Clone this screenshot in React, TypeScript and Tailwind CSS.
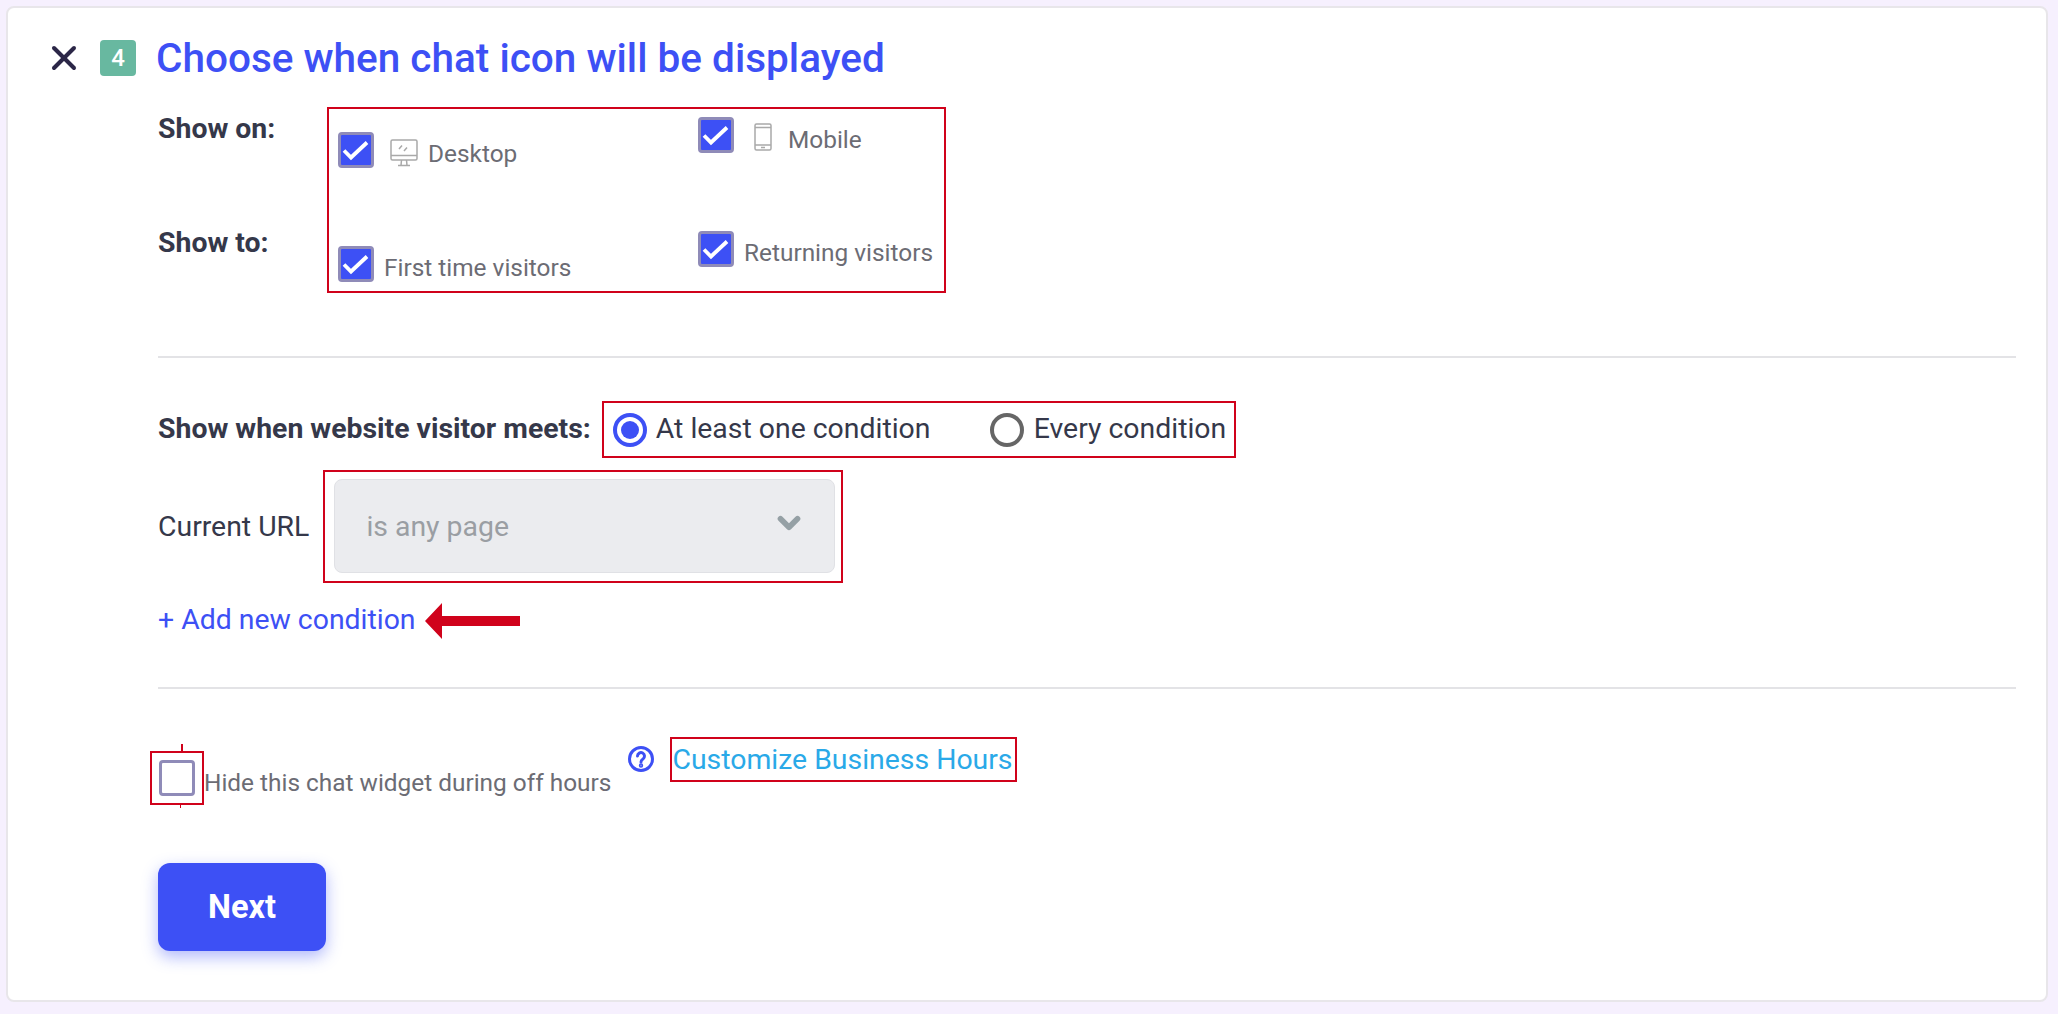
import { ChevronDown, X } from "lucide-react";

const RED = "border-2 border-[#d0021b]";

const CheckBox: React.FC<{ checked?: boolean }> = ({ checked = true }) => (
  <span
    className={
      "flex h-[36px] w-[36px] shrink-0 items-center justify-center rounded-[4px] border-[3px] border-[#8f8bb8] " +
      (checked ? "bg-[#3d50f5]" : "bg-white")
    }
  >
    {checked && (
      <svg width="30" height="30" viewBox="0 0 30 30" fill="none" stroke="#ffffff" strokeWidth="3.8">
        <path d="M3 15.500l7 7L26 7.500" />
      </svg>
    )}
  </span>
);

const DesktopIcon = () => (
  <svg width="28" height="28" viewBox="0 0 28 28" fill="none" stroke="#a9a9a9" strokeWidth="1.5">
    <rect x="1" y="1" width="26" height="20" rx="1.5" />
    <path d="M1 16.500h26M8 26.500h12M11.500 21l-.5 5.500M16.500 21l.5 5.500M9 10l3-3.500M14 12l3-3.500" />
  </svg>
);

const MobileIcon = () => (
  <svg width="18" height="28" viewBox="0 0 18 28" fill="none" stroke="#a9a9a9" strokeWidth="1.5">
    <rect x="1" y="1" width="16" height="26" rx="1.500" />
    <path d="M1 4.500h16M1 22h16M7 24.500h4" />
  </svg>
);

const HelpIcon = () => (
  <svg width="28" height="28" viewBox="0 0 28 28" fill="none" stroke="#3d50f5" strokeWidth="3">
    <circle cx="14" cy="14" r="11.500" />
    <path d="M10.500 11a3.500 3.500 0 1 1 5.500 3c-1.300.8-2 1.500-2 3" strokeLinecap="round" />
    <circle cx="14" cy="20.500" r="0.700" fill="#3d50f5" />
  </svg>
);

const Radio: React.FC<{ on?: boolean }> = ({ on }) => (
  <span
    className={
      "flex h-[34px] w-[34px] shrink-0 items-center justify-center rounded-full border-[4px] " +
      (on ? "border-[#3d50f5]" : "border-[#666666]")
    }
  >
    {on && <span className="h-[18px] w-[18px] rounded-full bg-[#3d50f5]" />}
  </span>
);

const Option: React.FC<{ label: string; icon?: React.ReactNode; textClass?: string }> = ({ label, icon, textClass }) => (
  <div className="flex items-start">
    <CheckBox />
    {icon}
    <span className={"text-[24.400px] leading-[27px] whitespace-nowrap text-[#6c6c74] " + (textClass || "")}>{label}</span>
  </div>
);

export default function App() {
  return (
    <div className="min-h-[1014px] bg-[#f6f0fe] pt-[6px] pr-[10px] pb-[12px] pl-[6px] font-['Roboto',sans-serif]">
      <div className="h-[996px] rounded-[8px] border-2 border-[#e8e6ea] bg-white pt-[28px] pr-[30px] pl-[150px]">
        <div className="relative flex items-center">
          <X className="absolute left-[-114px] top-[2px] h-[40px] w-[40px] text-[#2b2647]" strokeWidth={2.4} />
          <span className="absolute left-[-58px] top-[4px] flex h-[36px] w-[36px] items-center justify-center rounded-[4px] bg-[#68b8a0] text-[24px] font-medium text-white">
            4
          </span>
          <h1 className="ml-[-2px] text-[40.500px] font-medium leading-[44px] text-[#3d50f5]">Choose when chat icon will be displayed</h1>
        </div>

        <div className="mt-[27px] flex">
          <div className="w-[169px] pt-[6px] text-[28.400px] font-bold leading-[32px] text-[#35384a]">
            <div>Show on:</div>
            <div className="mt-[82px]">Show to:</div>
          </div>
          <div className={RED + " grid h-[186px] w-[619px] grid-cols-[360px_1fr] pl-[9px]"}>
            <div className="pt-[23px]">
              <div className="h-[114px]">
                <Option
                  label="Desktop"
                  icon={<span className="mt-[7px] mr-[10px] ml-[16px]"><DesktopIcon /></span>}
                  textClass="mt-[8px]"
                />
              </div>
              <Option label="First time visitors" textClass="mt-[8px] ml-[10px]" />
            </div>
            <div className="pt-[8px]">
              <div className="h-[114px]">
                <Option
                  label="Mobile"
                  icon={<span className="mt-[6px] mr-[16px] ml-[20px]"><MobileIcon /></span>}
                  textClass="mt-[9px]"
                />
              </div>
              <Option label="Returning visitors" textClass="mt-[8px] ml-[10px]" />
            </div>
          </div>
        </div>

        <div className="mt-[63px] h-[2px] bg-[#e3e3e6]" />

        <div className="mt-[43px] flex items-center">
          <span className="mr-[11px] mb-[2px] text-[28.400px] leading-[34px] font-bold whitespace-nowrap text-[#35384a]">Show when website visitor meets:</span>
          <div className={RED + " flex h-[57px] w-[634px] items-center pl-[9px] text-[28.400px] text-[#35384a]"}>
            <Radio on />
            <span className="ml-[9px] w-[334px]">At least one condition</span>
            <Radio />
            <span className="ml-[10px]">Every condition</span>
          </div>
        </div>

        <div className="mt-[12px] flex items-center">
          <span className="mr-[14px] text-[28.400px] leading-[34px] text-[#35384a]">Current URL</span>
          <div className={RED + " h-[113px] w-[520px] pt-[7px] pr-[6px] pl-[9px]"}>
            <div className="flex h-[94px] items-center justify-between rounded-[8px] border border-[#e0e1e5] bg-[#ebecef] pt-[2px] pr-[28px] pl-[31px] text-[28.400px] text-[#9a9ea3]">
              <span>is any page</span>
              <ChevronDown className="mb-[8px] h-[34px] w-[34px] text-[#95a0a5]" strokeWidth={4} />
            </div>
          </div>
        </div>

        <div className="mt-[18px] flex items-center">
          <span className="text-[28.400px] leading-[36px] whitespace-nowrap text-[#3d50f5]">+ Add new condition</span>
          <svg className="mt-[2px] ml-[9px]" width="95" height="36" viewBox="0 0 95 36" fill="#d0021b">
            <path d="M0 18 17 0v13h78v10H17v13z" />
          </svg>
        </div>

        <div className="mt-[48px] h-[2px] bg-[#e3e3e6]" />

        <div className="relative mt-[48px] flex h-[67px] items-start">
          <div className={RED + " absolute left-[-8px] top-[14px] flex h-[54px] w-[54px] items-center justify-center"}>
            <span className="absolute top-[-9px] left-[29px] h-[7px] w-[2px] bg-[#d0021b]" />
            <span className="absolute bottom-[-5px] left-[28px] h-[3px] w-[1px] bg-[#d0021b]" />
            <span className="h-[36px] w-[36px] rounded-[4px] border-[3px] border-[#8f8bb8] bg-white" />
          </div>
          <span className="mt-[32px] ml-[46px] text-[24.400px] leading-[27px] whitespace-nowrap text-[#6c6c74]">Hide this chat widget during off hours</span>
          <span className="mt-[8px] ml-[16px]"><HelpIcon /></span>
          <span className={RED + " ml-[15px] h-[45px] w-[347px] text-[28.400px] leading-[41px] whitespace-nowrap text-[#2aa9e8]"}>Customize Business Hours</span>
        </div>

        <button className="mt-[59px] h-[88px] w-[168px] rounded-[12px] bg-[#3d50f5] text-[32.500px] font-bold text-white shadow-[0_6px_16px_rgba(61,80,245,0.4)]">
          Next
        </button>
      </div>
    </div>
  );
}
